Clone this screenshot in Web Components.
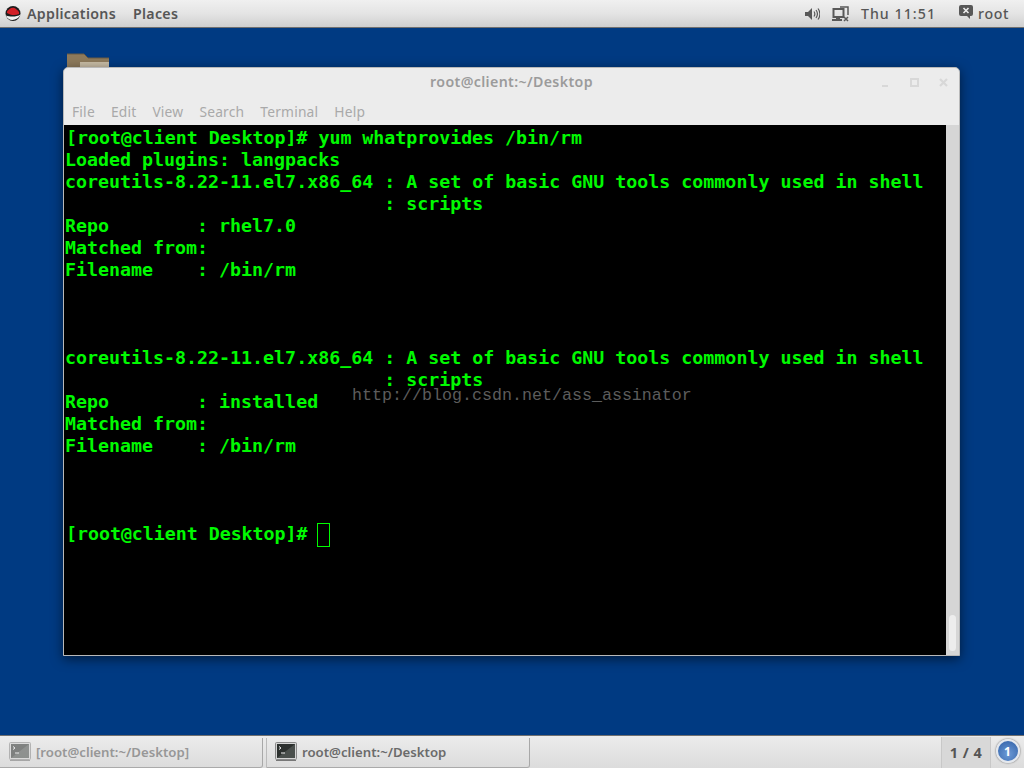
<!DOCTYPE html>
<html><head><meta charset="utf-8"><style>
html,body{margin:0;height:100%}
body{width:1024px;height:768px;overflow:hidden;background:#003a82;display:flex;flex-direction:column;font-family:"Noto Sans",sans-serif}
</style></head><body>
<top-bar></top-bar>
<desk-top>
  <term-window title-text="root@client:~/Desktop">
<term-screen></term-screen>
  </term-window>
</desk-top>
<task-bar></task-bar>
<script>
const def=(n,html,init)=>customElements.define(n,class extends HTMLElement{constructor(){super();this.attachShadow({mode:'open'}).innerHTML=html;init&&init(this)}});
const termIcon=(op)=>`<svg width="22" height="19" viewBox="0 0 22 19" style="opacity:${op};flex:none"><rect x=".5" y=".5" width="21" height="17" rx="1" fill="#d4d4d4" stroke="#8a8a8a"/><rect x="2" y="2" width="18" height="14" fill="#2c302e"/><path d="M2 16L20 2V16Z" fill="#4a4f4c"/><path d="M4 4.500l2 1.500-2 1.500M6 11h4" stroke="#eee" fill="none"/><path d="M1 18.500h20" stroke="#777"/></svg>`;
def('top-bar',`<style>
:host{display:flex;flex:none;height:27px;align-items:center;border-bottom:1px solid #6f6f6f;background:linear-gradient(#f0f0f0,#e4e4e4 50%,#cfcfcf);color:#565656;font:600 14.2px "Noto Sans",sans-serif;letter-spacing:.3px;white-space:nowrap}
.l{display:flex;align-items:center;padding-left:5px;flex:1}
.l svg{margin-right:6px}
.a{margin-right:17px}
.r{display:flex;align-items:center}
.t{font-weight:500;letter-spacing:1.05px}
</style>
<div class="l">
<svg width="16" height="15" viewBox="0 0 16 15"><circle cx="8" cy="7.500" r="7.500" fill="#1c1c1c"/><path d="M1 9.500C5 11 12 11 15.500 8.500 13 15 3 16 1 9.500Z" fill="#f2f2f2"/><path d="M2 7C1.500 5 3 4.500 4.500 3 7 1 10 1.500 11.500 3.500c2 1 3 3 2.500 4.500C10 10 5 9 2 7Z" fill="#d32027"/></svg>
<span class="a">Applications</span><span>Places</span></div>
<div class="r">
<svg style="margin-right:12px" width="16" height="14" viewBox="0 0 16 14"><path d="M1 5h3l4-4v12L4 9H1Z" fill="#585858"/><path d="M10 4.500c1 1.500 1 3.500 0 5M12 3c1.800 2.500 1.800 5.500 0 8M14 1.500c2.500 3.500 2.500 7.500 0 11" fill="none" stroke="#585858" stroke-width="1.200"/></svg>
<svg style="margin-right:12px" width="17" height="16" viewBox="0 0 17 16"><rect x="1.500" y="3" width="10" height="8" fill="none" stroke="#585858" stroke-width="2"/><path d="M0 13h10v2H0Z M4 11h4v2H4Z" fill="#585858"/><path d="M8 1h8v8" fill="none" stroke="#585858" stroke-width="1.500"/><path d="M12 11l4 4m0-4l-4 4" stroke="#585858" stroke-width="1.500"/></svg>
<span class="t" style="margin-right:23px">Thu 11:51</span>
<svg style="margin-right:5px;margin-top:-4px" width="14" height="14" viewBox="0 0 14 14"><path d="M2 0h10a2 2 0 0 1 2 2v7a2 2 0 0 1-2 2h-1v3l-3-3H2a2 2 0 0 1-2-2V2a2 2 0 0 1 2-2Z" fill="#585858"/><path d="M4.500 3l5 5m0-5l-5 5" stroke="#eee" stroke-width="1.600"/></svg>
<span class="t" style="margin-right:15px;letter-spacing:.6px">root</span>
</div>`);
def('desk-top',`<style>
:host{display:block;flex:1;position:relative;padding:39px 0 0 63px;background:#003a82;min-height:0}
.folder{position:absolute;left:67px;top:25px}
</style>
<svg class="folder" width="43" height="16" viewBox="0 0 43 16"><path d="M0 1h17l4 4h21v11H0Z" fill="#8d7a5c"/><path d="M13 9h29v7H13Z" fill="#c9bda6"/><path d="M0 1h17l4 4h21" fill="none" stroke="#6b5b42"/></svg>
<slot></slot>`);
def('term-window',`<style>
:host{width:895px;height:587px;border:1px solid #b9b9b9;border-radius:5px 5px 0 0;background:#ececec;box-shadow:0 3px 12px rgba(0,0,0,.55);position:relative;box-sizing:content-box;overflow:hidden;display:flex;flex-direction:column;font-family:"Noto Sans",sans-serif}
.t{height:29px;padding-bottom:2px;box-sizing:border-box;flex:none;display:flex;align-items:center;justify-content:center;color:#9b9b9b;font:600 14.2px "Noto Sans",sans-serif;letter-spacing:.36px;position:relative}
.b{position:absolute;top:10px;right:11px;display:flex;gap:20px;align-items:center}
.m{height:28px;padding-top:1px;box-sizing:border-box;flex:none;display:flex;align-items:center;padding-left:8px;gap:16px;color:#a9a9a9;font:13.8px "Noto Sans",sans-serif;letter-spacing:.2px}
.c{flex:1;display:flex;min-height:0}
.s{width:13px;flex:none;background:#d6d6d6;position:relative}
.s i{position:absolute;left:3px;right:3px;top:490px;height:36px;background:#ededed;border-radius:4px}
</style>
<div class="t"><span></span><div class="b">
<svg width="9" height="9" viewBox="0 0 9 9"><rect x="1" y="7" width="6" height="2" fill="#d8d8d8"/></svg>
<svg width="9" height="9" viewBox="0 0 9 9"><rect x="1" y="1" width="7" height="7" fill="none" stroke="#d8d8d8" stroke-width="2"/></svg>
<svg width="9" height="9" viewBox="0 0 9 9"><path d="M1 1l7 7m0-7l-7 7" stroke="#d8d8d8" stroke-width="2.200"/></svg>
</div></div>
<div class="m"><span>File</span><span>Edit</span><span>View</span><span>Search</span><span>Terminal</span><span>Help</span></div>
<div class="c"><slot></slot><div class="s"><i></i></div></div>`,el=>{el.shadowRoot.querySelector('.t span').textContent='root@client:~/Desktop'});
const lines=[["[root@client Desktop]# yum whatprovides /bin/rm",1],["Loaded plugins: langpacks"],["coreutils-8.22-11.el7.x86_64 : A set of basic GNU tools commonly used in shell"],["                             : scripts"],["Repo        : rhel7.0"],["Matched from:"],["Filename    : /bin/rm"],[""],[""],[""],["coreutils-8.22-11.el7.x86_64 : A set of basic GNU tools commonly used in shell"],["                             : scripts"],["Repo        : installed"],["Matched from:"],["Filename    : /bin/rm"],[""],[""],[""],["[root@client Desktop]# ",1]];
def('term-screen',`<style>
:host{display:block;flex:1;background:#000;color:#00fa00;font:bold 18.3px/22px "DejaVu Sans Mono",monospace;position:relative;overflow:hidden;padding-top:2px}
div{height:22px;white-space:pre;padding-left:1px}
.p{padding-left:2px;letter-spacing:-.03px}
.cur{display:inline-block;width:13px;height:24px;box-sizing:border-box;border:1px solid #00fa00;vertical-align:top;margin-left:-1px;margin-top:0}
.w{position:absolute;left:288px;top:260px;height:auto;color:#5c5c5c;font:16.67px/22px "Liberation Mono",monospace;padding:0}
</style><span id="o"></span><div class="w">http://blog.csdn.net/ass_assinator</div>`,el=>{
const o=el.shadowRoot.getElementById('o');lines.forEach((l,i)=>{const d=document.createElement('div');d.textContent=l[0];if(l[1])d.className='p';if(i==18){const c=document.createElement('span');c.className='cur';d.appendChild(c)}o.appendChild(d)})});
def('task-bar',`<style>
:host{display:flex;flex:none;height:32px;border-top:1px solid #6f6f6f;background:linear-gradient(#ececec,#dcdcdc);align-items:stretch;font:600 13.2px "Noto Sans",sans-serif;color:#6b6b6b;white-space:nowrap}
.b{display:flex;align-items:center;gap:5px;box-sizing:border-box;padding-left:9px;border-right:1px solid #a8a8a8;border-bottom:1px solid #aaa;border-radius:0 0 3px 0;margin-top:2px;padding-bottom:2px}
.i{width:263px;color:#979797}
.a{width:264px;margin-left:3px;margin-right:auto;border-left:1px solid #bbb;padding-left:8px;gap:5px}
.pg{width:50px;box-sizing:border-box;margin-top:1px;background:#d8d8d8;border:1px solid #c8c8c8;border-width:0 1px;display:flex;align-items:center;justify-content:center;color:#555;font-weight:700;font-size:14.5px;letter-spacing:.5px;padding-bottom:2px}
.n{width:33px;display:flex;align-items:center;justify-content:center;padding-bottom:2px}
.d{width:24px;height:24px;border-radius:50%;box-sizing:border-box;border:2px solid #e4e8ee;background:radial-gradient(circle at 50% 65%,#6c9ad6,#2f5fa6);color:#fff;display:flex;align-items:center;justify-content:center;font-size:12px;font-weight:700;box-shadow:0 0 2px #555}
</style>
<div class="b i">${termIcon(.55)}<span>[root@client:~/Desktop]</span></div>
<div class="b a">${termIcon(1)}<span>root@client:~/Desktop</span></div>
<div class="pg">1 / 4</div><div class="n"><div class="d">1</div></div>`);
</script>
</body></html>
